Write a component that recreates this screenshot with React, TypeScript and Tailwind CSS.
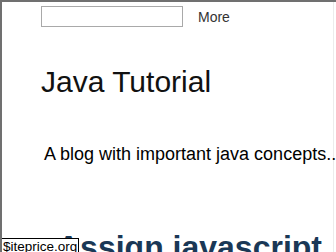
import React from "react";

export default function App() {
  return (
    <div
      className="relative h-[252px] w-[336px] overflow-hidden bg-white border-t-2 border-l-2 border-[#707070]"
      style={{ fontFamily: '"Liberation Sans", Arial, sans-serif' }}
    >
      <div className="w-[332px] h-full border-r border-[#ececec]">
        <div className="flex items-center pl-[39px] pt-[4px]">
          <input
            type="text"
            className="w-[142px] h-[21px] border border-[#a9a9a9] bg-white outline-none"
          />
          <span className="ml-[15px] text-[14px] leading-[16px] text-[#333]">More</span>
        </div>
        <h1 className="mt-[38px] pl-[39px] text-[30px] leading-[34px] text-[#111] font-normal whitespace-nowrap">
          Java Tutorial
        </h1>
        <p className="mt-[45px] pl-[42px] text-[18px] leading-[20px] text-black whitespace-nowrap">
          A blog with important java concepts...
        </p>
        <h2 className="mt-[65px] pl-[55px] text-[32px] leading-[37px] font-bold text-[#1a3856] whitespace-nowrap">
          Assign javascript
        </h2>
      </div>
      <div className="absolute left-[-2px] bottom-[-3px] bg-white border border-black pl-[2px] pr-[1px] text-[13.5px] leading-[15px] text-black">
        $iteprice.org
      </div>
    </div>
  );
}
